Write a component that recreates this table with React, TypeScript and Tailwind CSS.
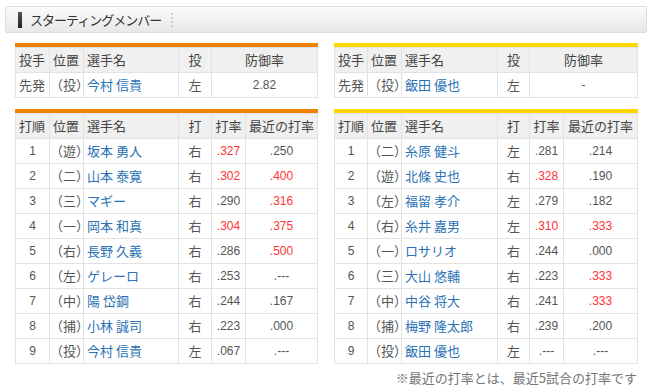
type Row = {
  order: string
  pos: string
  name: string
  hand: string
  avg: string
  avgHot?: boolean
  recent: string
  recentHot?: boolean
}

const giants: Row[] = [
  { order: '1', pos: '（遊）', name: '坂本 勇人', hand: '右', avg: '.327', avgHot: true, recent: '.250' },
  { order: '2', pos: '（二）', name: '山本 泰寛', hand: '右', avg: '.302', avgHot: true, recent: '.400', recentHot: true },
  { order: '3', pos: '（三）', name: 'マギー', hand: '右', avg: '.290', recent: '.316', recentHot: true },
  { order: '4', pos: '（一）', name: '岡本 和真', hand: '右', avg: '.304', avgHot: true, recent: '.375', recentHot: true },
  { order: '5', pos: '（右）', name: '長野 久義', hand: '右', avg: '.286', recent: '.500', recentHot: true },
  { order: '6', pos: '（左）', name: 'ゲレーロ', hand: '右', avg: '.253', recent: '.---' },
  { order: '7', pos: '（中）', name: '陽 岱鋼', hand: '右', avg: '.244', recent: '.167' },
  { order: '8', pos: '（捕）', name: '小林 誠司', hand: '右', avg: '.223', recent: '.000' },
  { order: '9', pos: '（投）', name: '今村 信貴', hand: '左', avg: '.067', recent: '.---' },
]

const tigers: Row[] = [
  { order: '1', pos: '（二）', name: '糸原 健斗', hand: '左', avg: '.281', recent: '.214' },
  { order: '2', pos: '（遊）', name: '北條 史也', hand: '右', avg: '.328', avgHot: true, recent: '.190' },
  { order: '3', pos: '（左）', name: '福留 孝介', hand: '左', avg: '.279', recent: '.182' },
  { order: '4', pos: '（右）', name: '糸井 嘉男', hand: '左', avg: '.310', avgHot: true, recent: '.333', recentHot: true },
  { order: '5', pos: '（一）', name: 'ロサリオ', hand: '右', avg: '.244', recent: '.000' },
  { order: '6', pos: '（三）', name: '大山 悠輔', hand: '右', avg: '.223', recent: '.333', recentHot: true },
  { order: '7', pos: '（中）', name: '中谷 将大', hand: '右', avg: '.241', recent: '.333', recentHot: true },
  { order: '8', pos: '（捕）', name: '梅野 隆太郎', hand: '右', avg: '.239', recent: '.200' },
  { order: '9', pos: '（投）', name: '飯田 優也', hand: '左', avg: '.---', recent: '.---' },
]

const th = 'h-[25px] border border-[#e2e2e2] bg-[#f0f0f0] font-normal text-[#444] p-0'
const td = 'h-[25px] border border-[#e2e2e2] bg-white p-0'
const plain = 'text-[#555]'
const link = 'text-[#2a72b5]'
const num = "font-['Liberation_Sans',sans-serif] text-[12px]"
const hot = (on?: boolean) => (on ? 'text-[#ff3333]' : 'text-[#555]')

function PitcherTable({ bar, name, era, widths }: { bar: string; name: string; era: string; widths: number[] }) {
  return (
    <div>
      <div className={`h-[4px] ${bar}`} />
      <table className="w-full table-fixed border-collapse text-[13px]">
        <colgroup>
          {widths.map((w, i) => (
            <col key={i} style={{ width: w }} />
          ))}
          <col />
        </colgroup>
        <thead>
          <tr>
            <th className={`${th} pl-[3px] text-left`}>投手</th>
            <th className={`${th} pl-[3px] text-left`}>位置</th>
            <th className={`${th} pl-[3px] text-left`}>選手名</th>
            <th className={`${th} text-center`}>投</th>
            <th className={`${th} text-center`}>防御率</th>
          </tr>
        </thead>
        <tbody>
          <tr>
            <td className={`${td} ${plain} pl-[3px]`}>先発</td>
            <td className={`${td} ${plain}`}>（投）</td>
            <td className={`${td} ${link} pl-[3px]`}>{name}</td>
            <td className={`${td} ${plain} text-center`}>左</td>
            <td className={`${td} ${plain} text-center ${num}`}>{era}</td>
          </tr>
        </tbody>
      </table>
    </div>
  )
}

function LineupTable({ bar, rows, widths }: { bar: string; rows: Row[]; widths: number[] }) {
  return (
    <div>
      <div className={`h-[4px] ${bar}`} />
      <table className="w-full table-fixed border-collapse text-[13px]">
        <colgroup>
          {widths.map((w, i) => (
            <col key={i} style={{ width: w }} />
          ))}
          <col />
        </colgroup>
        <thead>
          <tr>
            <th className={`${th} pl-[3px] text-left`}>打順</th>
            <th className={`${th} pl-[3px] text-left`}>位置</th>
            <th className={`${th} pl-[3px] text-left`}>選手名</th>
            <th className={`${th} text-center`}>打</th>
            <th className={`${th} text-center`}>打率</th>
            <th className={`${th} text-center`}>最近の打率</th>
          </tr>
        </thead>
        <tbody>
          {rows.map((r) => (
            <tr key={r.order}>
              <td className={`${td} ${plain} text-center ${num}`}>{r.order}</td>
              <td className={`${td} ${plain}`}>{r.pos}</td>
              <td className={`${td} ${link} pl-[3px]`}>{r.name}</td>
              <td className={`${td} ${plain} text-center`}>{r.hand}</td>
              <td className={`${td} text-center ${num} ${hot(r.avgHot)}`}>{r.avg}</td>
              <td className={`${td} text-center ${num} ${hot(r.recentHot)}`}>{r.recent}</td>
            </tr>
          ))}
        </tbody>
      </table>
    </div>
  )
}

export default function App() {
  return (
    <div className="w-[650px] h-[392px] bg-white pt-[6px] pl-[5px] font-['Noto_Sans_CJK_JP',sans-serif]">
      <div className="flex h-[27px] w-[642px] items-center rounded-[2px] border border-[#dcdcdc] bg-gradient-to-b from-[#fbfbfb] to-[#e8e8e8]">
        <div className="ml-[12px] h-[16px] w-[4px] bg-gradient-to-b from-[#555] to-[#222]" />
        <span className="ml-[8px] text-[13px] leading-none tracking-[-1px] text-[#333]">スターティングメンバー</span>
        <div className="ml-[10px] flex flex-col gap-[2px]">
          <span className="h-[2px] w-[2px] bg-[#cfcfcf]" />
          <span className="h-[2px] w-[2px] bg-[#cfcfcf]" />
          <span className="h-[2px] w-[2px] bg-[#cfcfcf]" />
          <span className="h-[2px] w-[2px] bg-[#cfcfcf]" />
        </div>
      </div>

      <div className="ml-[10px] mt-[10px] grid grid-cols-[303px_304px] gap-x-[16px] gap-y-[11px]">
        <PitcherTable bar="bg-[#ef8200]" name="今村 信貴" era="2.82" widths={[34, 34, 95, 33]} />
        <PitcherTable bar="bg-[#ffd800]" name="飯田 優也" era="-" widths={[33, 34, 96, 32]} />
        <LineupTable bar="bg-[#ef8200]" rows={giants} widths={[34, 34, 95, 33, 34]} />
        <LineupTable bar="bg-[#ffd800]" rows={tigers} widths={[33, 34, 96, 32, 34]} />
      </div>

      <div className="mt-[4px] w-[632px] text-right text-[13px] text-[#777]">※最近の打率とは、最近5試合の打率です</div>
    </div>
  )
}
